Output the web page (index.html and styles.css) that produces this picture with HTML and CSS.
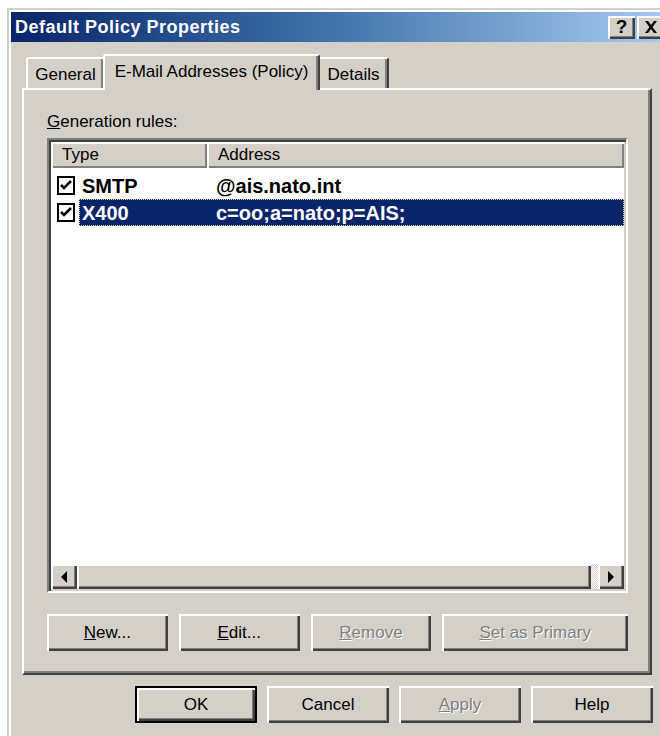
FILE: index.html
```html
<!DOCTYPE html>
<html lang="en">
<head>
<meta charset="utf-8">
<title>Default Policy Properties</title>
<link rel="stylesheet" href="styles.css">
</head>
<body>
<div class="window">
  <div class="titlebar">
    <span class="title">Default Policy Properties</span>
    <div class="caption-buttons">
      <div class="cap-btn">?</div>
      <div class="cap-btn">
        <svg width="14" height="12" viewBox="0 0 14 12"><path d="M1 0h3l3 4 3-4h3L8.5 6 13 12h-3L7 8l-3 4H1l4.5-6z" fill="#000"/></svg>
      </div>
    </div>
  </div>

  <div class="dialog-body">
    <div class="tabs">
      <div class="tab tab-general">General</div>
      <div class="tab tab-active">E-Mail Addresses (Policy)</div>
      <div class="tab tab-details">Details</div>
    </div>

    <div class="panel">
      <div class="field-label"><u>G</u>eneration rules:</div>

      <div class="listview">
        <div class="lv-header">
          <div class="lv-col col-type">Type</div>
          <div class="lv-col col-addr">Address</div>
        </div>
        <div class="lv-rows">
          <div class="lv-row">
            <span class="check"><svg width="12" height="11" viewBox="0 0 12 11"><path d="M1 5l3 3 7-7" fill="none" stroke="#000" stroke-width="2.6"/></svg></span>
            <div class="lv-item">
              <span class="cell-type">SMTP</span>
              <span class="cell-addr">@ais.nato.int</span>
            </div>
          </div>
          <div class="lv-row">
            <span class="check"><svg width="12" height="11" viewBox="0 0 12 11"><path d="M1 5l3 3 7-7" fill="none" stroke="#000" stroke-width="2.6"/></svg></span>
            <div class="lv-item selected">
              <span class="cell-type">X400</span>
              <span class="cell-addr">c=oo;a=nato;p=AIS;</span>
            </div>
          </div>
        </div>
        <div class="hscroll">
          <div class="sb-btn"><span class="arrow-left"></span></div>
          <div class="sb-thumb"></div>
          <div class="sb-track"></div>
          <div class="sb-btn"><span class="arrow-right"></span></div>
        </div>
      </div>

      <div class="actions">
        <div class="btn btn-rule"><span><u>N</u>ew...</span></div>
        <div class="btn btn-rule"><span><u>E</u>dit...</span></div>
        <div class="btn btn-rule disabled"><span><u>R</u>emove</span></div>
        <div class="btn btn-wide disabled"><span><u>S</u>et as Primary</span></div>
      </div>
    </div>

    <div class="footer">
      <div class="btn btn-default"><span>OK</span></div>
      <div class="btn"><span>Cancel</span></div>
      <div class="btn disabled"><span><u>A</u>pply</span></div>
      <div class="btn"><span>Help</span></div>
    </div>
  </div>
</div>
</body>
</html>
```

FILE: styles.css
```css
* {
  box-sizing: border-box;
}

html,
body {
  margin: 0;
  padding: 0;
}

body {
  width: 660px;
  height: 736px;
  overflow: hidden;
  background: #ffffff;
  font-family: "Liberation Sans", Arial, sans-serif;
  font-size: 17px;
  line-height: 20px;
  color: #000000;
}

/* classic window frame */
.window {
  margin: 8px 0 0 7px;
  width: 660px;
  height: 740px;
  background: #d4d0c8;
  border-top: 2px solid #d4d0c8;
  border-left: 2px solid #d4d0c8;
  padding: 2px 0 0 2px;
  box-shadow: inset 2px 2px #ffffff;
}

.titlebar {
  height: 30px;
  display: flex;
  align-items: center;
  justify-content: space-between;
  padding-left: 4px;
  background: linear-gradient(to right, #0a246a 0%, #3a6ea5 45%, #a6caf0 100%);
}

.title {
  color: #ffffff;
  font-weight: bold;
  font-size: 18px;
  letter-spacing: 0.5px;
}

.caption-buttons {
  display: flex;
  gap: 2px;
  margin-right: 3px;
}

.cap-btn {
  width: 27px;
  height: 23px;
  display: flex;
  align-items: center;
  justify-content: center;
  background: #d4d0c8;
  font-weight: bold;
  font-size: 19px;
  box-shadow: inset 2px 2px #ffffff, inset -2px -2px #404040, inset -3px -3px #808080;
}

.dialog-body {
  padding: 12px 11px 0 11px;
}

/* tab strip */
.tabs {
  display: flex;
  align-items: flex-end;
  padding-left: 4px;
  height: 34px;
  position: relative;
  z-index: 1;
}

.tab {
  height: 31px;
  display: flex;
  align-items: center;
  justify-content: center;
  padding-top: 2px;
  background: #d4d0c8;
  border-top: 2px solid #ffffff;
  border-left: 2px solid #ffffff;
  border-right: 2px solid #404040;
  border-radius: 3px 3px 0 0;
  box-shadow: inset -2px 0 #808080;
}

.tab-general {
  width: 79px;
}

.tab-active {
  width: 217px;
  height: 36px;
  margin: 0 -2px -2px -2px;
  padding-top: 0;
  padding-bottom: 2px;
  position: relative;
  z-index: 2;
}

.tab-details {
  width: 71px;
}

.panel {
  width: 630px;
  height: 587px;
  padding: 22px 22px 0 23px;
  border-top: 2px solid #ffffff;
  border-left: 2px solid #ffffff;
  border-right: 2px solid #404040;
  border-bottom: 2px solid #404040;
  box-shadow: inset -2px -2px #808080;
}

.field-label {
  height: 20px;
  margin-bottom: 6px;
}

/* list view */
.listview {
  width: 581px;
  height: 455px;
  display: flex;
  flex-direction: column;
  background: #ffffff;
  border-top: 2px solid #808080;
  border-left: 2px solid #808080;
  border-right: 2px solid #ffffff;
  border-bottom: 2px solid #ffffff;
  box-shadow: inset 2px 2px #404040, inset -2px -2px #d4d0c8;
  padding: 2px;
}

.lv-header {
  display: flex;
  height: 26px;
  flex: none;
  background: #d4d0c8;
}

.lv-col {
  height: 26px;
  display: flex;
  align-items: center;
  padding-left: 11px;
  box-shadow: inset 2px 2px #ffffff, inset -2px -2px #808080;
}

.col-type {
  width: 156px;
}

.col-addr {
  flex: 1;
}

.lv-rows {
  flex: 1;
  padding-top: 4px;
  font-weight: bold;
  font-size: 20px;
}

.lv-row {
  height: 27px;
  display: flex;
  align-items: center;
  padding-left: 6px;
}

.check {
  width: 18px;
  height: 19px;
  flex: none;
  display: flex;
  align-items: center;
  justify-content: center;
  border: 2px solid #000000;
  background: #ffffff;
  margin-right: 4px;
}

.lv-item {
  flex: 1;
  height: 27px;
  display: flex;
  align-items: center;
  padding-left: 3px;
}

.lv-item.selected {
  background: #0a246a;
  color: #ffffff;
  outline: 1px dotted #e6d88a;
  outline-offset: -1px;
}

.cell-type {
  width: 134px;
}

/* horizontal scroll bar */
.hscroll {
  height: 25px;
  flex: none;
  display: flex;
}

.sb-btn,
.sb-thumb {
  background: #d4d0c8;
  box-shadow: inset 2px 2px #ffffff, inset -2px -2px #404040, inset -3px -3px #808080;
}

.sb-btn {
  width: 26px;
  display: flex;
  align-items: center;
  justify-content: center;
}

.sb-thumb {
  flex: 1;
}

.sb-track {
  width: 7px;
  background-color: #ffffff;
  background-image: repeating-conic-gradient(#d4d0c8 0 25%, #ffffff 0 50%);
  background-size: 2px 2px;
}

.arrow-left {
  width: 0;
  height: 0;
  border-top: 6px solid transparent;
  border-bottom: 6px solid transparent;
  border-right: 6px solid #000000;
}

.arrow-right {
  width: 0;
  height: 0;
  border-top: 6px solid transparent;
  border-bottom: 6px solid transparent;
  border-left: 6px solid #000000;
}

/* push buttons */
.actions {
  display: flex;
  gap: 11px;
  margin-top: 21px;
}

.btn {
  width: 122px;
  height: 37px;
  display: flex;
  align-items: center;
  justify-content: center;
  background: #d4d0c8;
  box-shadow: inset 2px 2px #ffffff, inset -2px -2px #404040, inset -3px -3px #808080;
}

.btn-rule {
  width: 121px;
}

.btn-wide {
  width: 186px;
}

.btn.disabled {
  color: #808080;
  text-shadow: 1px 1px #ffffff;
}

.btn-default {
  border: 2px solid #000000;
}

.footer {
  display: flex;
  justify-content: flex-end;
  gap: 10px;
  margin-top: 11px;
  width: 631px;
}
```
